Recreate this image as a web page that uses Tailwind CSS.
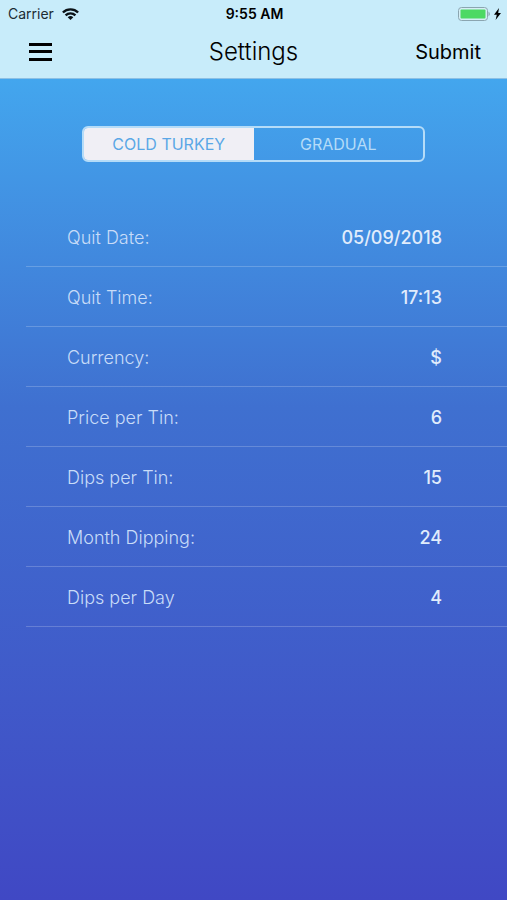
<!DOCTYPE html>
<html lang="en">
<head>
    <meta charset="UTF-8">
    <meta name="viewport" content="width=device-width, initial-scale=1.0">
    <title>Settings</title>
    <script src="https://cdn.jsdelivr.net/npm/@tailwindcss/browser@4"></script>
</head>
<body class="min-h-screen flex flex-col font-['Inter',sans-serif] bg-[#4048c4]">
    <header class="bg-[#c8ecfa] border-b border-[#8cc0e4] text-black">
        <!-- Status bar -->
        <div class="grid grid-cols-3 items-center h-7 pl-2 pr-1.5 text-sm">
            <div class="flex items-center gap-2 text-[#1c2b33]">
                <span>Carrier</span>
                <svg class="w-[17px] h-3" viewBox="0 0 17 12" fill="none" stroke="#0b1216" stroke-width="2.4">
                    <path d="M.9 4.500a10.800 10.800 0 0 1 15.200 0"/>
                    <path d="M3.600 7.400a7 7 0 0 1 9.800 0"/>
                    <path d="M8.500 12 5.700 9.300a4 4 0 0 1 5.600 0z" fill="#0b1216" stroke="none"/>
                </svg>
            </div>
            <div class="text-center font-semibold">9:55 AM</div>
            <div class="flex items-center justify-end gap-1">
                <svg class="w-8 h-[14px]" viewBox="0 0 32 14">
                    <rect x="0.500" y="0.500" width="29" height="13" rx="3" fill="#d5eef5" stroke="#8ba5b0"/>
                    <rect x="2.500" y="2.500" width="25" height="9" rx="1" fill="#4cd964"/>
                    <path d="M30.500 4.800c1.800.7 1.800 3.700 0 4.400z" fill="#8ba5b0"/>
                </svg>
                <svg class="w-[7px] h-3" viewBox="0 0 7 12" fill="#000">
                    <path d="M5 0 0 6.800h2.800L1.600 12 7 5H4.200z"/>
                </svg>
            </div>
        </div>
        <!-- Nav bar -->
        <div class="grid grid-cols-3 items-center h-[50px] px-[26px] pb-0.5">
            <button type="button" aria-label="Menu" class="w-7 h-6">
                <svg class="w-7 h-6" viewBox="0 0 28 24" fill="#000">
                    <rect x="3" y="3" width="23" height="3"/>
                    <rect x="3" y="10" width="23" height="3"/>
                    <rect x="3" y="18" width="23" height="3"/>
                </svg>
            </button>
            <h1 class="text-center text-2xl font-light">Settings</h1>
            <button type="button" class="justify-self-end text-xl">Submit</button>
        </div>
    </header>

    <main class="flex-1 bg-linear-to-b from-[#43a6ee] via-[#3f70d0] via-40% to-[#4048c4] pt-[47px]">
        <div class="mx-[82px] h-9 grid grid-cols-2 rounded-md border-2 border-[#b5dcf8] overflow-hidden text-base">
            <button type="button" class="bg-[#f0eff5] text-[#5aa7e6]">COLD TURKEY</button>
            <button type="button" class="text-[#b5dcf8]">GRADUAL</button>
        </div>

        <form class="mt-[45px] ml-[26px] text-lg text-[#c8dcf8]">
            <div class="flex items-center h-[60px] pt-0.5 pl-[41px] pr-[65px] border-b border-white/20">
                <label for="quitDate" class="flex-1 font-light">Quit Date:</label>
                <input id="quitDate" type="text" value="05/09/2018" class="w-32 text-right font-medium text-[#e0ecfc] outline-none">
            </div>
            <div class="flex items-center h-[60px] pt-0.5 pl-[41px] pr-[65px] border-b border-white/20">
                <label for="quitTime" class="flex-1 font-light">Quit Time:</label>
                <input id="quitTime" type="text" value="17:13" class="w-32 text-right font-medium text-[#e0ecfc] outline-none">
            </div>
            <div class="flex items-center h-[60px] pt-0.5 pl-[41px] pr-[65px] border-b border-white/20">
                <label for="currency" class="flex-1 font-light">Currency:</label>
                <input id="currency" type="text" value="$" class="w-32 text-right font-medium text-[#e0ecfc] outline-none">
            </div>
            <div class="flex items-center h-[60px] pt-0.5 pl-[41px] pr-[65px] border-b border-white/20">
                <label for="price" class="flex-1 font-light">Price per Tin:</label>
                <input id="price" type="text" value="6" class="w-32 text-right font-medium text-[#e0ecfc] outline-none">
            </div>
            <div class="flex items-center h-[60px] pt-0.5 pl-[41px] pr-[65px] border-b border-white/20">
                <label for="dipsTin" class="flex-1 font-light">Dips per Tin:</label>
                <input id="dipsTin" type="text" value="15" class="w-32 text-right font-medium text-[#e0ecfc] outline-none">
            </div>
            <div class="flex items-center h-[60px] pt-0.5 pl-[41px] pr-[65px] border-b border-white/20">
                <label for="months" class="flex-1 font-light">Month Dipping:</label>
                <input id="months" type="text" value="24" class="w-32 text-right font-medium text-[#e0ecfc] outline-none">
            </div>
            <div class="flex items-center h-[60px] pt-0.5 pl-[41px] pr-[65px] border-b border-white/20">
                <label for="dipsDay" class="flex-1 font-light">Dips per Day</label>
                <input id="dipsDay" type="text" value="4" class="w-32 text-right font-medium text-[#e0ecfc] outline-none">
            </div>
        </form>
    </main>
</body>
</html>
